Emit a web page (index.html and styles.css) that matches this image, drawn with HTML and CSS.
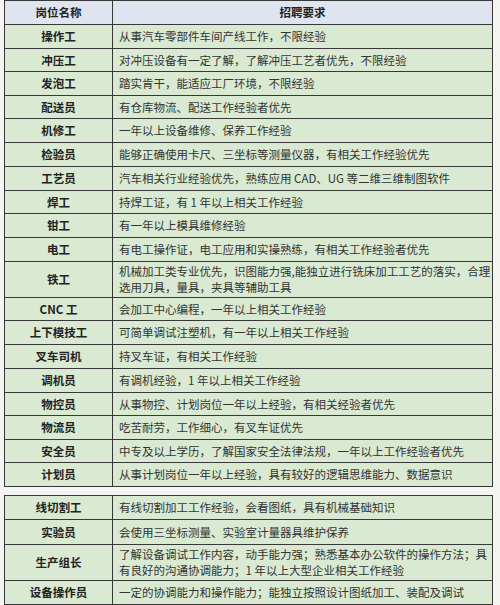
FILE: index.html
```html
<!DOCTYPE html>
<html lang="zh-CN">
<head>
<meta charset="utf-8">
<title>岗位招聘要求</title>
<link rel="stylesheet" href="styles.css">
</head>
<body>
<div class="page">
  <table class="jobs">
    <colgroup><col class="c-name"><col class="c-req"></colgroup>
    <thead>
      <tr class="head"><th>岗位名称</th><th>招聘要求</th></tr>
    </thead>
    <tbody>
      <tr class="r24"><th>操作工</th><td>从事汽车零部件车间产线工作，不限经验</td></tr>
      <tr class="r23"><th>冲压工</th><td>对冲压设备有一定了解，了解冲压工艺者优先，不限经验</td></tr>
      <tr class="r24"><th>发泡工</th><td>踏实肯干，能适应工厂环境，不限经验</td></tr>
      <tr class="r23"><th>配送员</th><td>有仓库物流、配送工作经验者优先</td></tr>
      <tr class="r24"><th>机修工</th><td>一年以上设备维修、保养工作经验</td></tr>
      <tr class="r24"><th>检验员</th><td>能够正确使用卡尺、三坐标等测量仪器，有相关工作经验优先</td></tr>
      <tr class="r24"><th>工艺员</th><td>汽车相关行业经验优先，熟练应用 CAD、UG 等二维三维制图软件</td></tr>
      <tr class="r23"><th>焊工</th><td>持焊工证，有 1 年以上相关工作经验</td></tr>
      <tr class="r24"><th>钳工</th><td>有一年以上模具维修经验</td></tr>
      <tr class="r24"><th>电工</th><td>有电工操作证，电工应用和实操熟练，有相关工作经验者优先</td></tr>
      <tr class="r36"><th>铁工</th><td>机械加工类专业优先，识图能力强,能独立进行铣床加工工艺的落实，合理<br>选用刀具，量具，夹具等辅助工具</td></tr>
      <tr class="r23"><th>CNC 工</th><td>会加工中心编程，一年以上相关工作经验</td></tr>
      <tr class="r24"><th>上下模技工</th><td>可简单调试注塑机，有一年以上相关工作经验</td></tr>
      <tr class="r24"><th>叉车司机</th><td>持叉车证，有相关工作经验</td></tr>
      <tr class="r24"><th>调机员</th><td>有调机经验，1 年以上相关工作经验</td></tr>
      <tr class="r23"><th>物控员</th><td>从事物控、计划岗位一年以上经验，有相关经验者优先</td></tr>
      <tr class="r24"><th>物流员</th><td>吃苦耐劳，工作细心，有叉车证优先</td></tr>
      <tr class="r23"><th>安全员</th><td>中专及以上学历，了解国家安全法律法规，一年以上工作经验者优先</td></tr>
      <tr class="r24"><th>计划员</th><td>从事计划岗位一年以上经验，具有较好的逻辑思维能力、数据意识</td></tr>
    </tbody>
  </table>
  <table class="jobs second">
    <colgroup><col class="c-name"><col class="c-req"></colgroup>
    <tbody>
      <tr class="r24"><th>线切割工</th><td>有线切割加工工作经验，会看图纸，具有机械基础知识</td></tr>
      <tr class="r25"><th>实验员</th><td>会使用三坐标测量、实验室计量器具维护保养</td></tr>
      <tr class="r36"><th>生产组长</th><td>了解设备调试工作内容，动手能力强；熟悉基本办公软件的操作方法；具<br>有良好的沟通协调能力；1 年以上大型企业相关工作经验</td></tr>
      <tr class="r24"><th>设备操作员</th><td>一定的协调能力和操作能力；能独立按照设计图纸加工、装配及调试</td></tr>
    </tbody>
  </table>
</div>
</body>
</html>
```

FILE: styles.css
```css
html, body {
  margin: 0;
  padding: 0;
  background: #ffffff;
}

.page {
  width: 500px;
  height: 605px;
  padding: 0 7px 0 4px;
  box-sizing: border-box;
  background: #f4f5f3;
  font-family: "Noto Sans CJK SC", "Noto Sans", sans-serif;
  color: #2b2b2b;
}

.jobs {
  width: 489px;
  border-collapse: collapse;
  table-layout: fixed;
  background: #d9e9d2;
  border: 1.5px solid #333333;
}

.second {
  margin-top: 8px;
}

.c-name { width: 108px; }

.jobs th,
.jobs td {
  border: 1px solid #383838;
  padding: 0;
  font-size: 11.5px;
  line-height: 15px;
  vertical-align: middle;
}

.jobs th {
  font-weight: bold;
  text-align: center;
  color: #222;
}

.jobs td {
  text-align: left;
  padding-left: 6px;
  padding-right: 2px;
  white-space: nowrap;
  color: #333;
}

.head th {
  background: #dee5f1;
  height: 23px;
}

.r23 { height: 23px; }
.r24 { height: 24px; }
.r25 { height: 25px; }
.r36 { height: 36px; }

.r36 td {
  line-height: 15.5px;
}
```
